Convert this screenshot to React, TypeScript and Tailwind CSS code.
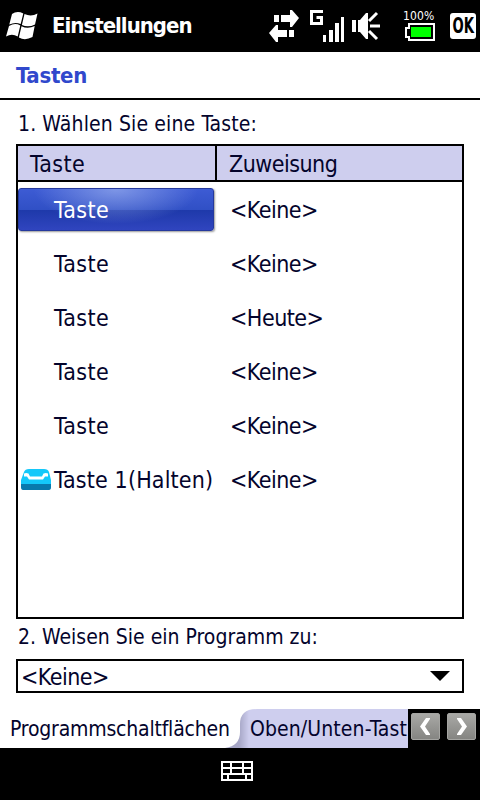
const rows = [
  { name: 'Taste', value: '<Keine>', selected: true },
  { name: 'Taste', value: '<Keine>' },
  { name: 'Taste', value: '<Heute>' },
  { name: 'Taste', value: '<Keine>' },
  { name: 'Taste', value: '<Keine>' },
  { name: 'Taste 1(Halten)', value: '<Keine>', icon: true },
];

function WindowsLogo() {
  return (
    <svg className="ml-[6px] h-[32px] w-[32px] shrink-0" viewBox="0 0 32 32" fill="#fff">
      <path d="M6 4Q11 .5 17.300 3.400L14.700 14Q9 11.500 3.300 14.600Z" />
      <path d="M18.500 4Q25 7 31.500 3.500L29 14.500Q22 18 15.900 14.900Z" />
      <path d="M3 16Q9 12.500 14.300 15.500L11.700 26.500Q6 23 0 26.500Z" />
      <path d="M15.500 16.300Q22 19.500 28.700 16L26.500 27Q19 31 12.900 27.500Z" />
    </svg>
  );
}

function StatusIcons() {
  return (
    <svg className="absolute left-[260px] top-0 h-[52px] w-[140px]" viewBox="260 0 140 52" fill="#fff">
      <path d="M274 15h5v7h-5zM281 15h9v-5h2l7 8-7 9h-2v-5h-9zM289 30h5v7h-5zM287 30h-9v-5h-2l-7 8 7 9h2v-5h9z" />
      <path d="M323 11.500h-11.500v12h10v-6h-5" fill="none" stroke="#fff" strokeWidth="3" />
      <path d="M323 35h3v7h-3zM329 30h4v12h-4zM335 23h4v19h-4zM341 17h3v25h-3z" />
      <path d="M352 20h4v12h-4zM358 20h2l6-7h2v26h-2l-6-7h-2z" />
      <path d="M369 21l8-8M370 26h10M369 31l8 8" fill="none" stroke="#fff" strokeWidth="3" />
    </svg>
  );
}

function PhoneIcon() {
  return (
    <svg className="ml-[3px] h-[21px] w-[30px]" viewBox="0 0 30 21">
      <path d="M3 3Q4 0 8 0h15q4 0 5 3l2 8v7q0 2-2 2H2q-2 0-2-2v-7Z" fill="#14c8fa" />
      <path d="M0 15h30v3q0 3-2 3H2q-2 0-2-3Z" fill="#0879ad" />
      <path d="M3 4.500Q5 3.500 7.500 4.500L9 7.500h12l1.500-3q2.500-1 4.500 0v3h-3l-2 3H8l-2-3H3Z" fill="#fff" />
    </svg>
  );
}

function Arrow({ right }: { right?: boolean }) {
  return (
    <div className="flex h-[27px] w-[29px] items-center justify-center rounded-[2px] border border-[#a5a5a2] bg-gradient-to-b from-[#a9a9a6] to-[#858582]">
      <svg className="h-[17px] w-[11px]" viewBox="0 0 11 17" fill="#fff">
        <path d={right ? 'M1 0h4l6 8.500L5 17H1v-1l5-7.500L1 1Z' : 'M10 0H6L0 8.500 6 17h4v-1L5 8.500 10 1Z'} />
      </svg>
    </div>
  );
}

export default function App() {
  return (
    <div className="flex h-[800px] w-[480px] flex-col overflow-hidden whitespace-nowrap bg-white font-['DejaVu_Sans_Condensed','DejaVu_Sans',sans-serif] font-stretch-condensed text-[#04042c]">
      <header className="relative flex h-[52px] shrink-0 items-center bg-black text-white">
        <WindowsLogo />
        <h1 className="ml-[14px] text-[22px] font-bold leading-[50px] tracking-[-1px]">Einstellungen</h1>
        <StatusIcons />
        <div className="absolute left-[403px] top-[8px] text-[12px] leading-[16px] tracking-[0.1px]">100%</div>
        <svg className="absolute left-[404px] top-[22px] h-[20px] w-[32px]" viewBox="0 0 32 20">
          <path d="M5 2h25v16H5v-3H2V6h3z" fill="none" stroke="#fff" strokeWidth="2" />
          <path d="M7 5h20v10H7z" fill="#0f0" />
        </svg>
        <div className="absolute left-[450px] top-[13px] flex h-[26px] w-[26px] items-center justify-center rounded-[3px] bg-white pt-[2px] text-[21px] font-bold text-black">
          <span className="scale-x-[0.7]">OK</span>
        </div>
      </header>
      <div className="h-[48px] shrink-0 border-b-2 border-black pl-4 text-[22px] font-bold leading-[47px] tracking-[-0.3px] text-[#3048cc]">Tasten</div>
      <main className="flex flex-col px-4">
        <div className="h-[44px] pl-[2px] text-[21px] leading-[48px] tracking-[0.12px]">1. Wählen Sie eine Taste:</div>
        <div className="h-[475px] border-2 border-black">
          <div className="flex h-[36px] border-b-2 border-black bg-[#ceceee] text-[23px] leading-[36px]">
            <div className="w-[199px] border-r-2 border-black pl-[12px] tracking-[0.4px]">Taste</div>
            <div className="pl-[12px] tracking-[-0.5px]">Zuweisung</div>
          </div>
          {rows.map((row, i) => (
            <div key={i} className="flex h-[54px] items-center text-[23px]">
              <div className={row.selected ? 'flex h-[43px] w-[196px] items-center rounded-[3px] border border-[#25399d] bg-[radial-gradient(ellipse_at_50%_0%,#9fb4f0aa_0%,#819be800_60%),linear-gradient(#3d5bd4_0%,#3050c5_51%,#1e39aa_52%,#3045bf_100%)] text-white shadow-[1px_1px_2px_#999]' : 'flex h-[43px] w-[196px] items-center'}>
                <span className={row.selected ? 'w-[35px] shrink-0' : 'w-[36px] shrink-0'}>{row.icon && <PhoneIcon />}</span>
                <span className={row.icon ? 'pt-[2px] tracking-[0.15px]' : 'pt-[2px] tracking-[0.4px]'}>{row.name}</span>
              </div>
              <span className="pl-[16px] pt-[2px] tracking-[-0.5px]">{row.value}</span>
            </div>
          ))}
        </div>
        <div className="h-[40px] pl-[2px] text-[21px] leading-[36px]">2. Weisen Sie ein Programm zu:</div>
        <div className="flex h-[34px] items-center justify-between border-2 border-black pl-[3px] pr-[12px] text-[23px] tracking-[-0.5px]">
          <span className="pt-[2px]">&lt;Keine&gt;</span>
          <svg className="h-[10px] w-[20px]" viewBox="0 0 20 10"><path d="M0 0h20L10 10Z" /></svg>
        </div>
      </main>
      <div className="mt-[16px] flex h-[39px] shrink-0 text-[21px] leading-[41px]">
        <div className="w-[225px] shrink-0 pl-[10px] tracking-[-0.2px]">Programmschaltflächen</div>
        <div className="relative w-[183px] shrink-0 overflow-hidden">
          <svg className="absolute left-0 top-0 h-[39px] w-[183px]" viewBox="0 0 183 39">
            <defs>
              <linearGradient id="tab" gradientUnits="userSpaceOnUse" x1="14" x2="24" y1="0" y2="0">
                <stop stopColor="#a6a6c6" />
                <stop offset="1" stopColor="#ceceee" />
              </linearGradient>
            </defs>
            <path d="M0 39Q15 37 15 23v-8Q15 0 32 0h151v39Z" fill="url(#tab)" />
          </svg>
          <span className="relative pl-[25px] tracking-[0.1px]">Oben/Unten-Tast</span>
        </div>
        <div className="flex grow gap-[7px] bg-black pl-[3px] pt-[4px]">
          <Arrow />
          <Arrow right />
        </div>
      </div>
      <footer className="flex grow justify-center bg-black pr-[6px] pt-[13px]">
        <svg className="h-[20px] w-[32px]" viewBox="0 0 32 20" fill="none" stroke="#fff" strokeWidth="2">
          <path d="M1 1h30v18H1zM1 7h30M1 13h30M10 1v12M22 1v12M7 13v6M25 13v6" />
        </svg>
      </footer>
    </div>
  );
}
